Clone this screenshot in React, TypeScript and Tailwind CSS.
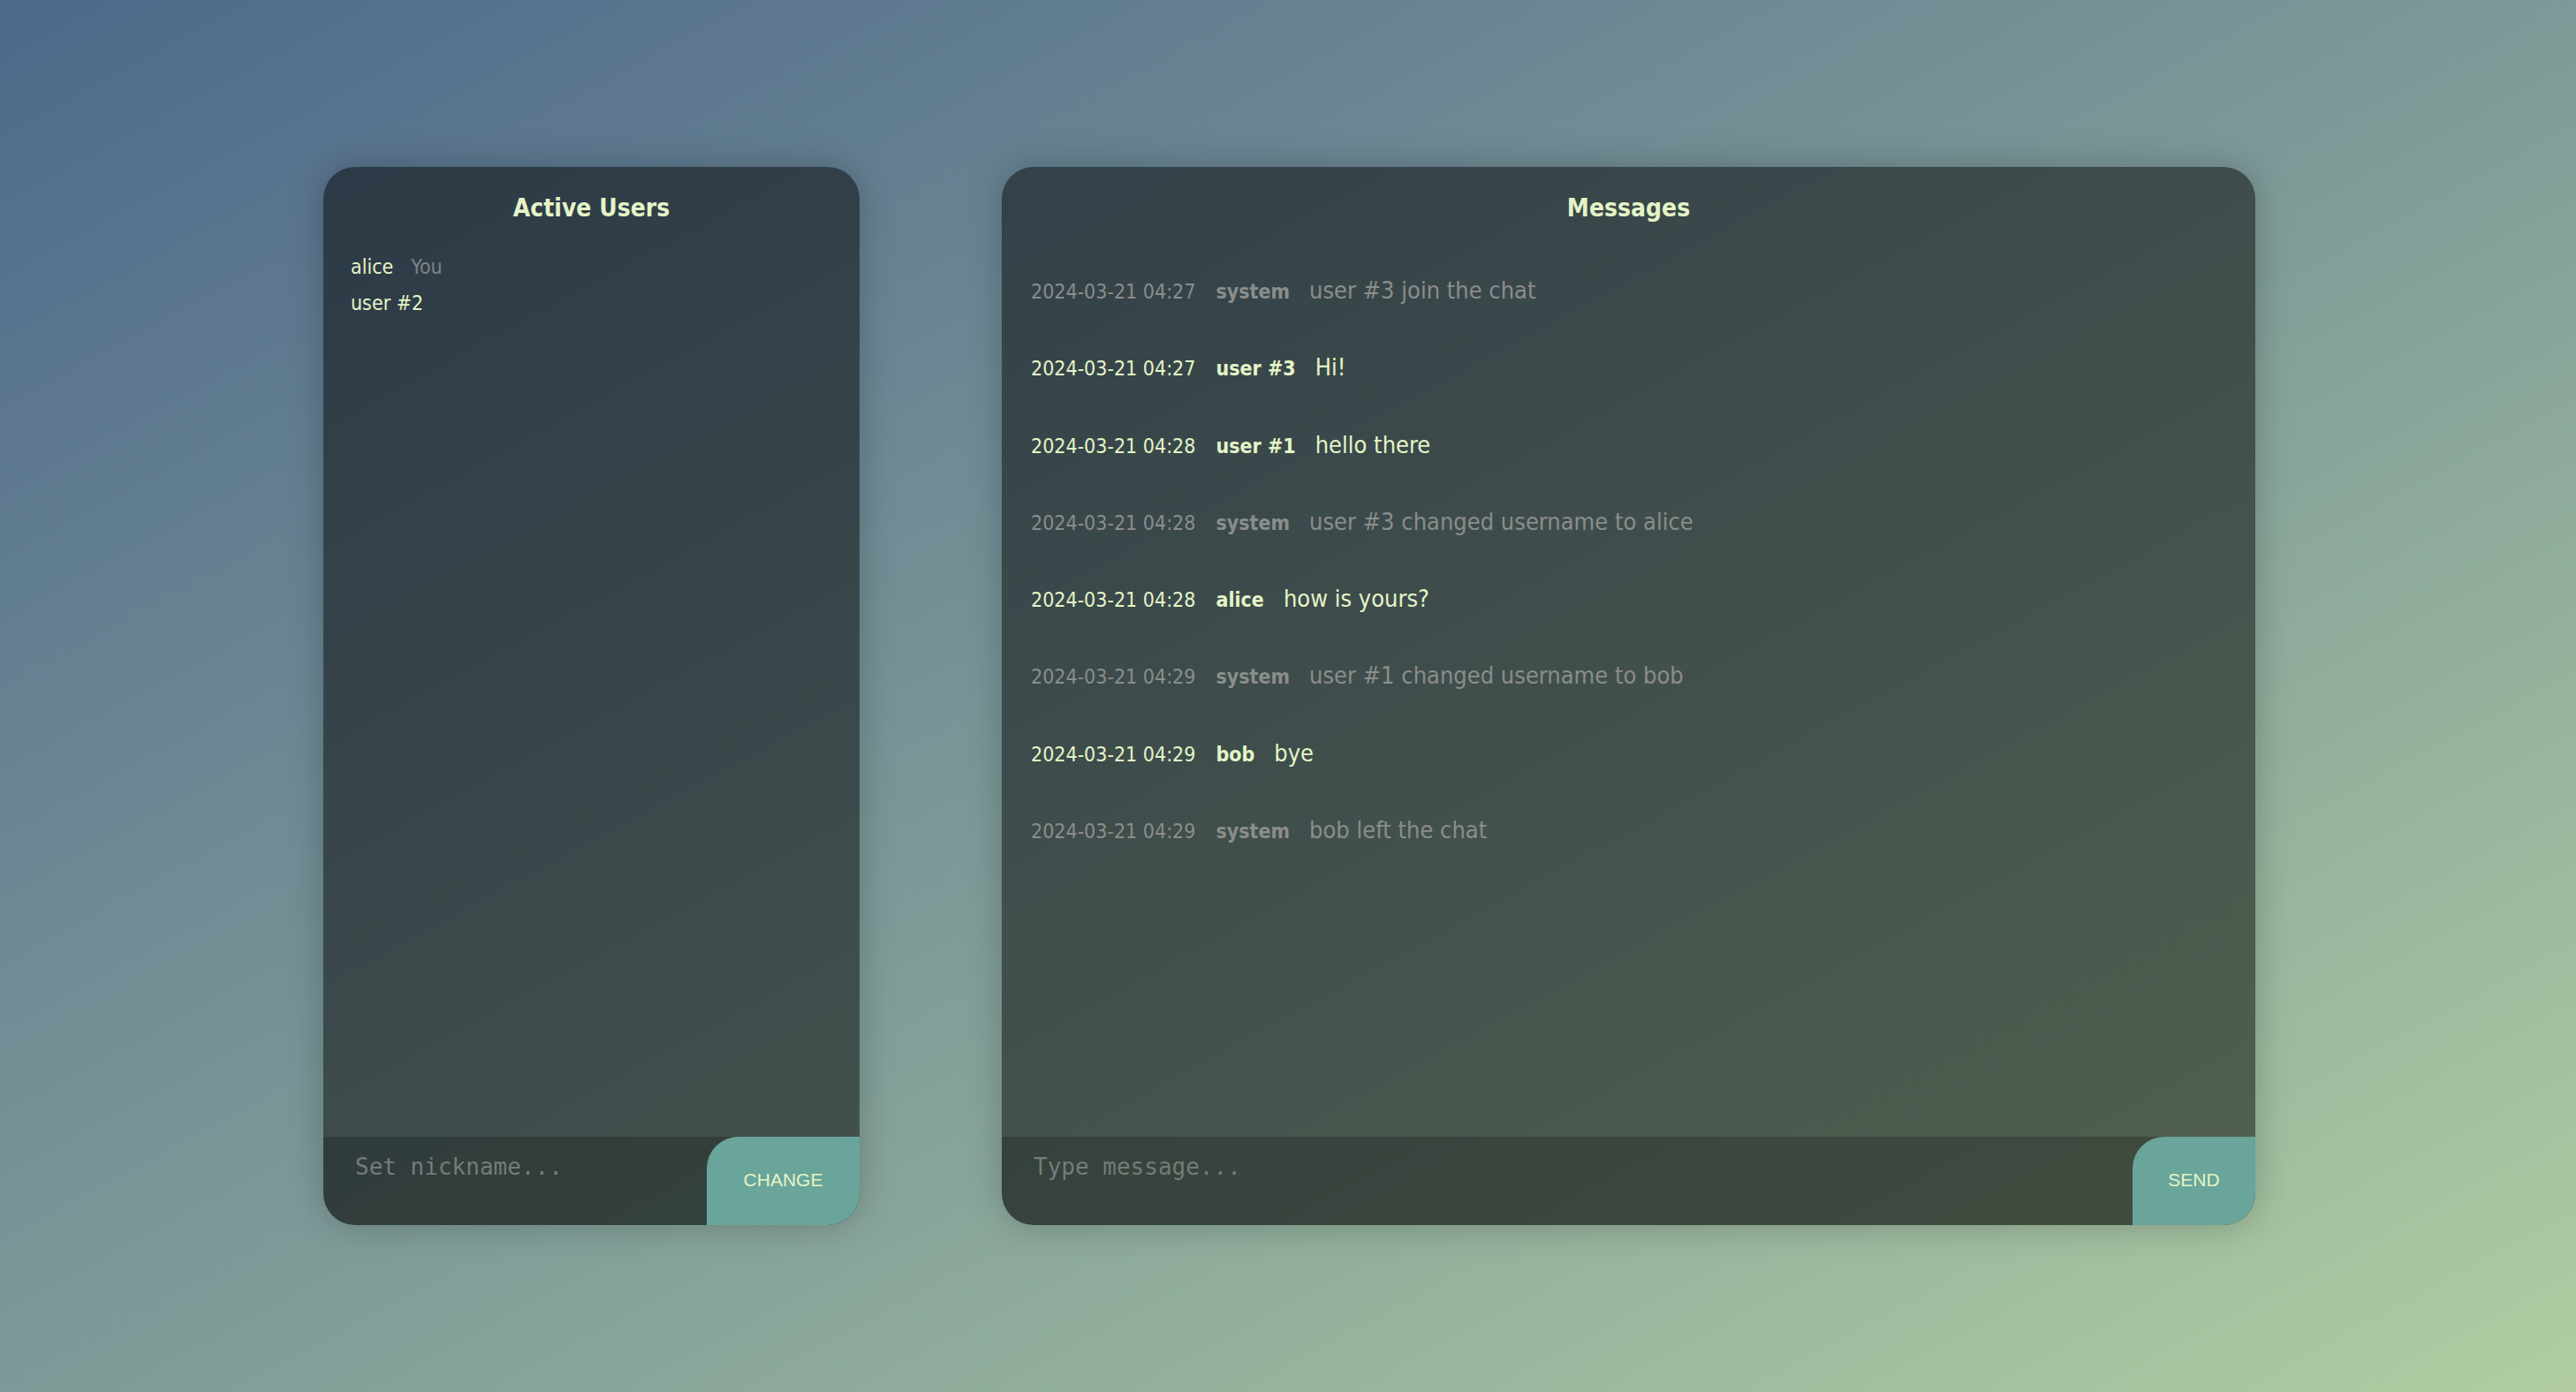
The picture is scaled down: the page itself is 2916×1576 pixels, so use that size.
import React from "react";

type Msg = { time: string; user: string; text: string; system?: boolean };

const messages: Msg[] = [
  { time: "2024-03-21 04:27", user: "system", text: "user #3 join the chat", system: true },
  { time: "2024-03-21 04:27", user: "user #3", text: "Hi!" },
  { time: "2024-03-21 04:28", user: "user #1", text: "hello there" },
  { time: "2024-03-21 04:28", user: "system", text: "user #3 changed username to alice", system: true },
  { time: "2024-03-21 04:28", user: "alice", text: "how is yours?" },
  { time: "2024-03-21 04:29", user: "system", text: "user #1 changed username to bob", system: true },
  { time: "2024-03-21 04:29", user: "bob", text: "bye" },
  { time: "2024-03-21 04:29", user: "system", text: "bob left the chat", system: true },
];

export default function App() {
  return (
    <div className="min-h-screen w-full flex items-center justify-center gap-[161px] pl-[3px] bg-linear-to-br from-[#4e688a] to-[#b1cda1] font-['DejaVu_Sans_Condensed','DejaVu_Sans',sans-serif] font-stretch-condensed">
      {/* Left panel */}
      <div className="w-[607px] h-[1198px] flex flex-col rounded-[36px] overflow-hidden bg-black/50 shadow-[0_0_40px_rgba(0,0,0,0.22)]">
        <div className="pt-[30px] text-center text-[28px] leading-[33px] font-bold text-[#e5f4c7]">
          Active Users
        </div>
        <div className="flex-1 mt-[30px] px-[31px]">
          <div className="text-[23px] leading-[41px] text-[#e5f4c7]">
            alice<span className="ml-[20px] text-[#7e8184]">You</span>
          </div>
          <div className="text-[23px] leading-[41px] text-[#e5f4c7]">user #2</div>
        </div>
        <div className="h-[100px] flex bg-black/20">
          <input
            className="flex-1 min-w-0 h-[68px] py-[19px] px-[36px] bg-transparent outline-none font-['DejaVu_Sans_Mono',monospace] text-[26px] text-[#e5f4c7] placeholder:text-[#757b78]"
            placeholder="Set nickname..."
          />
          <button className="w-[173px] h-[100px] pb-[3px] rounded-tl-[36px] bg-[#69a59a] text-[#e5f4c7] text-[21px] font-['Liberation_Sans',Arial,sans-serif]">
            CHANGE
          </button>
        </div>
      </div>

      {/* Right panel */}
      <div className="w-[1419px] h-[1198px] flex flex-col rounded-[36px] overflow-hidden bg-black/50 shadow-[0_0_40px_rgba(0,0,0,0.22)]">
        <div className="pt-[30px] text-center text-[28px] leading-[33px] font-bold text-[#e5f4c7]">
          Messages
        </div>
        <div className="flex-1 mt-[33px] px-[33px]">
          {messages.map((m, i) => (
            <div
              key={i}
              className={
                "text-[27px] leading-[87.3px] whitespace-nowrap " +
                (m.system ? "text-[#8b8d8b]" : "text-[#e5f4c7]")
              }
            >
              <span className="text-[23px] leading-none">{m.time}</span>
              <span className="ml-[23px] text-[23px] leading-none font-bold">{m.user}</span>
              <span className="ml-[22px]">{m.text}</span>
            </div>
          ))}
        </div>
        <div className="h-[100px] flex bg-black/20">
          <input
            className="flex-1 min-w-0 h-[68px] py-[19px] px-[36px] bg-transparent outline-none font-['DejaVu_Sans_Mono',monospace] text-[26px] text-[#e5f4c7] placeholder:text-[#757b78]"
            placeholder="Type message..."
          />
          <button className="w-[139px] h-[100px] pb-[3px] rounded-tl-[36px] bg-[#69a59a] text-[#e5f4c7] text-[21px] font-['Liberation_Sans',Arial,sans-serif]">
            SEND
          </button>
        </div>
      </div>
    </div>
  );
}
